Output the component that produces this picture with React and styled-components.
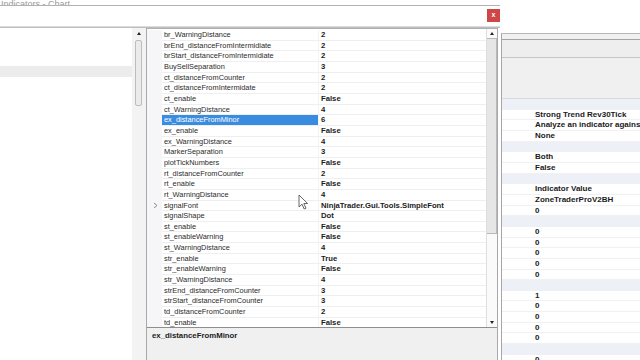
import React from 'react';
import styled, { createGlobalStyle } from 'styled-components';

const GlobalStyle = createGlobalStyle`
  html, body { margin: 0; padding: 0; background: #fff; overflow: hidden; }
  * { box-sizing: border-box; }
  #root { width: 640px; height: 360px; }
`;

const ROW = 32 / 3;

const properties = [
  ['br_WarningDistance', '2'],
  ['brEnd_distanceFromIntermidiate', '2'],
  ['brStart_distanceFromIntermidiate', '2'],
  ['BuySellSeparation', '3'],
  ['ct_distanceFromCounter', '2'],
  ['ct_distanceFromIntermidate', '2'],
  ['ct_enable', 'False'],
  ['ct_WarningDistance', '4'],
  ['ex_distanceFromMinor', '6', 'selected'],
  ['ex_enable', 'False'],
  ['ex_WarningDistance', '4'],
  ['MarkerSeparation', '3'],
  ['plotTickNumbers', 'False'],
  ['rt_distanceFromCounter', '2'],
  ['rt_enable', 'False'],
  ['rt_WarningDistance', '4'],
  ['signalFont', 'NinjaTrader.Gui.Tools.SimpleFont', 'expand'],
  ['signalShape', 'Dot'],
  ['st_enable', 'False'],
  ['st_enableWarning', 'False'],
  ['st_WarningDistance', '4'],
  ['str_enable', 'True'],
  ['str_enableWarning', 'False'],
  ['str_WarningDistance', '4'],
  ['strEnd_distanceFromCounter', '3'],
  ['strStart_distanceFromCounter', '3'],
  ['td_distanceFromCounter', '2'],
  ['td_enable', 'False'],
];

// null = category row
const backRows = [
  null, 'Strong Trend Rev30Tick', 'Analyze an indicator against another', 'None',
  null, 'Both', 'False',
  null, 'Indicator Value', 'ZoneTraderProV2BH', '0',
  null, '0', '0', '0', '0', '0',
  null, '1', '0', '0', '0', '0',
  null, '0',
];

const App = () => (
  <Screen>
    <GlobalStyle />
    <Dialog>
      <TitleStrip><TitleText>Indicators - Chart</TitleText></TitleStrip>
      <Header>
        <CloseButton>x</CloseButton>
      </Header>
      <Body>
        <LeftList>
          <LeftBand />
        </LeftList>
        <LeftScroll>
          <ArrowBox><UpTriangle /></ArrowBox>
          <LeftThumb />
        </LeftScroll>
        <GridPanel>
          <GridList>
            <Rows>
              {properties.map(([name, value, flag]) => (
                <PropRow key={name}>
                  <Gutter>
                    {flag === 'expand' && (
                      <svg width="5" height="7" viewBox="0 0 5 7">
                        <path d="M1 1 L4 3.5 L1 6" fill="none" stroke="#8a8a8a" strokeWidth="1" />
                      </svg>
                    )}
                  </Gutter>
                  <NameCell $selected={flag === 'selected'}>{name}</NameCell>
                  <ValueCell>{value}</ValueCell>
                </PropRow>
              ))}
            </Rows>
            <VScroll>
              <ArrowBox><UpTriangle /></ArrowBox>
              <GridThumb />
              <Track />
              <ArrowBox><DownTriangle /></ArrowBox>
            </VScroll>
          </GridList>
          <Description>ex_distanceFromMinor</Description>
        </GridPanel>
        <Spacer />
      </Body>
    </Dialog>
    <BackWindow>
      <BackInner>
        <Band $h={6} $line="#a4a4a4" />
        <Band $h={18} $line="#c6c6c6" $bg="#eeeeee" />
        <Band $h={41} $line="#d9d9d9" />
        {backRows.map((v, i) =>
          v === null ? <CategoryRow key={i} /> : <BackRow key={i}>{v}</BackRow>
        )}
      </BackInner>
    </BackWindow>
    <Cursor width="11" height="16" viewBox="0 0 11 16">
      <path d="M1 1 L1 13 L4 10.2 L6.2 15 L8 14.2 L5.8 9.5 L9.6 9.5 Z" fill="#fff" stroke="#555" strokeWidth="0.9" strokeLinejoin="round" />
    </Cursor>
  </Screen>
);

const Screen = styled.div`
  position: relative;
  width: 640px;
  height: 360px;
  display: flex;
  overflow: hidden;
  background: #fff;
  font-family: "Liberation Sans", Arial, sans-serif;
  color: #1c1c1c;
`;

const Dialog = styled.div`
  width: 500px;
  flex: none;
  display: flex;
  flex-direction: column;
`;

const TitleStrip = styled.div`
  height: 6px;
  border-bottom: 1px solid #b2b2b2;
  display: flex;
  align-items: flex-end;
  overflow: hidden;
  padding-left: 1px;
`;

const TitleText = styled.div`
  font-size: 9px;
  line-height: 9px;
  color: #9a9a9a;
  margin-bottom: -4px;
  white-space: nowrap;
`;

const Header = styled.div`
  height: 21px;
  border-bottom: 1px solid #dcdcdc;
  display: flex;
  justify-content: flex-end;
  align-items: flex-start;
  padding-top: 3px;
`;

const CloseButton = styled.div`
  width: 13px;
  height: 13px;
  background: #cf4646;
  color: #fff;
  font-size: 7px;
  font-weight: bold;
  line-height: 12px;
  text-align: center;
`;

const Body = styled.div`
  flex: 1;
  display: flex;
  border-top: 1px solid #bdbdbd;
  min-height: 0;
`;

const LeftList = styled.div`
  width: 132px;
  background: #fff;
`;

const LeftBand = styled.div`
  margin-top: 38px;
  height: 11px;
  background: #ececec;
`;

const LeftScroll = styled.div`
  width: 14px;
  background: #f3f3f3;
  display: flex;
  flex-direction: column;
  align-items: center;
  padding-top: 1px;
`;

const ArrowBox = styled.div`
  height: 9px;
  width: 100%;
  display: flex;
  align-items: center;
  justify-content: center;
  flex: none;
`;

const UpTriangle = styled.div`
  width: 0;
  height: 0;
  border-left: 2.5px solid transparent;
  border-right: 2.5px solid transparent;
  border-bottom: 3px solid #222;
`;

const DownTriangle = styled(UpTriangle)`
  border-bottom: none;
  border-top: 3px solid #222;
`;

const LeftThumb = styled.div`
  margin-top: 2px;
  margin-right: 2px;
  width: 7px;
  height: 66px;
  border: 1px solid #bdbdbd;
  border-radius: 2px;
  background: #ebebeb;
`;

const GridPanel = styled.div`
  width: 352px;
  display: flex;
  flex-direction: column;
  border-left: 1px solid #a9a9a9;
  border-right: 1px solid #a9a9a9;
  border-top: 1px solid #b0b0b0;
`;

const GridList = styled.div`
  height: 298px;
  display: flex;
  overflow: hidden;
`;

const Rows = styled.div`
  flex: 1;
  padding-top: 1px;
  overflow: hidden;
  background: #fff;
`;

const PropRow = styled.div`
  height: ${ROW}px;
  display: grid;
  grid-template-columns: 15px 156px 1fr;
`;

const Gutter = styled.div`
  background: #f6f6f8;
  display: flex;
  align-items: center;
  justify-content: center;
  padding-left: 2px;
`;

const NameCell = styled.div`
  padding-left: 2px;
  font-size: 7.4px;
  line-height: ${ROW - 1}px;
  white-space: nowrap;
  overflow: hidden;
  border-bottom: 1px solid #efefef;
  color: ${({ $selected }) => ($selected ? '#fff' : '#2a2a2a')};
  background: ${({ $selected }) => ($selected ? '#3a8ce0' : 'transparent')};
`;

const ValueCell = styled.div`
  padding-left: 2px;
  font-size: 7.7px;
  font-weight: bold;
  line-height: ${ROW - 1}px;
  white-space: nowrap;
  overflow: hidden;
  border-bottom: 1px solid #efefef;
  border-left: 1px solid #f3f3f3;
`;

const VScroll = styled.div`
  width: 11px;
  flex: none;
  display: flex;
  flex-direction: column;
  background: #fafafa;
  border-left: 1px solid #dedede;
`;

const GridThumb = styled.div`
  height: 196px;
  flex: none;
  background: #e6e6e6;
  border: 1px solid #b9b9b9;
  border-left: none;
`;

const Track = styled.div`
  flex: 1;
`;

const Description = styled.div`
  flex: 1;
  background: #f0f0f0;
  border-top: 1px solid #8e8e8e;
  padding: 3px 5px;
  font-size: 7.8px;
  font-weight: bold;
  line-height: 10px;
`;

const Spacer = styled.div`
  flex: 1;
  background: #fff;
`;

const BackWindow = styled.div`
  flex: 1;
  padding-top: 33px;
  padding-left: 1px;
  display: flex;
  flex-direction: column;
`;

const BackInner = styled.div`
  flex: 1;
  border-left: 1px solid #a6a6a6;
  border-top: 1px solid #b8b8b8;
  overflow: hidden;
`;

const Band = styled.div`
  height: ${({ $h }) => $h}px;
  background: ${({ $bg }) => $bg || '#f0f0f0'};
  border-bottom: 1px solid ${({ $line }) => $line};
`;

const CategoryRow = styled.div`
  height: ${ROW}px;
  background: #eef0f7;
`;

const BackRow = styled.div`
  height: ${ROW}px;
  padding-left: 33px;
  font-size: 8px;
  font-weight: bold;
  line-height: ${ROW - 1}px;
  white-space: nowrap;
  overflow: hidden;
  border-bottom: 1px solid #f1f1f1;
  color: #1a1a1a;
`;

const Cursor = styled.svg`
  position: absolute;
  left: 298px;
  top: 194px;
`;

export default App;
